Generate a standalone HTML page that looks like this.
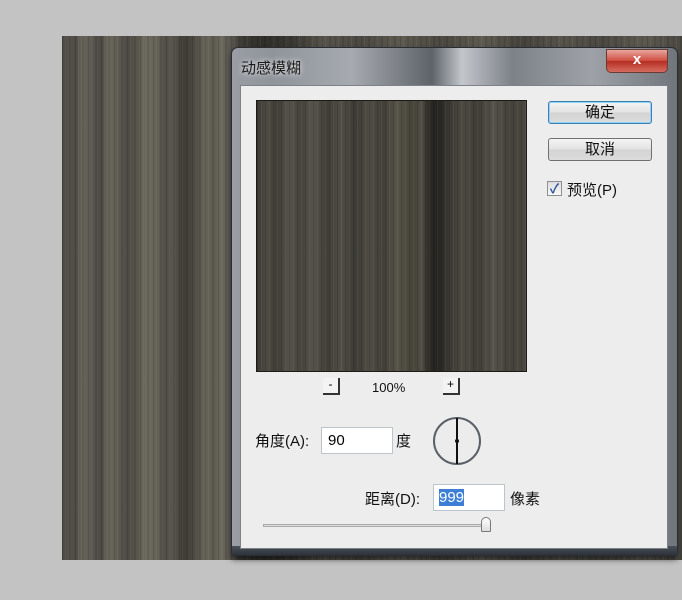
<!DOCTYPE html>
<html><head><meta charset="utf-8"><style>
*{margin:0;padding:0;box-sizing:border-box}
body{width:682px;height:600px;background:#c3c3c3;position:relative;overflow:hidden;font-family:"Liberation Sans","Noto Sans CJK SC",sans-serif;}
.canvas{position:absolute;left:62px;top:36px;width:620px;height:524px;
background:linear-gradient(90deg,#4a4842 0,#55534b 8px,#4c4a43 14px,#6a675d 20px,#5a584f 30px,#4b4942 40px,#6c695e 46px,#5e5b52 56px,#4c4a43 66px,#5a574e 76px,#6e6b60 84px,#636056 96px,#4f4d45 104px,#5b584f 112px,#3e3c36 120px,#4a4841 132px,#67645a 142px,#5f5c52 152px,#6b685d 160px,#55534b 170px,#3d3b35 180px,#2f2e29 200px,#3a3833 230px,#55524a 260px,#4b4942 300px,#5c594f 340px,#49473f 380px,#5e5b51 420px,#45433c 460px,#55534a 500px,#4a4841 540px,#5c5950 580px,#4b4942 620px);}
.canvas:after{content:"";position:absolute;inset:0;background:repeating-linear-gradient(90deg,rgba(0,0,0,.12) 0 1px,transparent 1px 3px,rgba(255,255,255,.05) 3px 4px,transparent 4px 7px,rgba(0,0,0,.1) 7px 9px,transparent 9px 13px)}
.dlg{position:absolute;left:231px;top:47px;width:447px;height:509px;border-radius:7px 7px 3px 3px;border:1px solid #2a2d33;
background:linear-gradient(90deg,#9a9ea4 0,#8f949b 40px,#a6aab0 120px,#5e6369 200px,#c3c7cc 230px,#7d8188 280px,#9ea2a8 360px,#6f747a 447px);box-shadow:0 4px 6px rgba(0,0,0,.5)}
.dlg .bottom{position:absolute;left:0;right:0;bottom:0;height:9px;background:linear-gradient(#4a5059,#2e333a)}
.title{position:absolute;left:9px;top:9px;font-size:15px;color:#1a1a1a;text-shadow:0 0 6px #fff}
.close{position:absolute;left:374px;top:1px;width:62px;height:24px;border:1px solid #6a3a35;border-radius:0 0 5px 5px;background:linear-gradient(#e6a79f,#cf4a3d 50%,#b52e22 51%,#d56c5f);color:#fff;font-weight:bold;font-size:15px;text-align:center;line-height:20px}
.content{position:absolute;left:8px;top:37px;width:428px;height:464px;background:#ededed;border:1px solid #7d8289}
.preview{position:absolute;left:15px;top:14px;width:271px;height:272px;border:1px solid #1c1b18;
background:linear-gradient(90deg,#3b3a34 0,#4d4b43 10px,#3e3c36 20px,#55534a 32px,#45433c 44px,#57544b 56px,#403e37 70px,#504e45 84px,#3c3a34 98px,#4e4c44 112px,#433f38 126px,#565349 140px,#464339 155px,#4f4c43 165px,#2b2a25 172px,#24231f 180px,#3a3832 192px,#4c4a41 206px,#3f3d36 220px,#55524a 236px,#44423b 252px,#4a4840 271px)}
.preview:after{content:"";position:absolute;inset:0;background:repeating-linear-gradient(90deg,rgba(0,0,0,.15) 0 1px,transparent 1px 4px,rgba(255,255,255,.06) 4px 5px,transparent 5px 8px)}
.btn{position:absolute;left:307px;width:104px;height:23px;border:1px solid #707070;border-radius:3px;background:linear-gradient(#f4f4f4,#e2e2e2 50%,#d3d3d3 51%,#dcdcdc);font-size:15px;text-align:center;line-height:21px;color:#111}
.btn.def{border-color:#3c7fb1;box-shadow:inset 0 0 0 1px #8fd3f5}
.t{position:absolute;font-size:15px;color:#111;white-space:nowrap}
.cb{position:absolute;left:306px;top:95px;width:15px;height:15px;border:1px solid #8f8f8f;background:linear-gradient(#dcdcdc,#fafafa);font-size:13px;font-weight:bold;line-height:13px;text-align:center;color:#2a4f9c}
.zb{position:absolute;width:17px;height:17px;border-right:2px solid #333;border-bottom:2px solid #333;background:#f3f3f3;font-size:12px;text-align:center;line-height:13px}
.inp{position:absolute;height:27px;background:#fff;border:1px solid #bcc4cc;font-size:15px;padding:4px 0 0 6px}
</style></head><body>
<div class="canvas"></div>
<div class="dlg">
<div class="bottom"></div>
<div class="title">动感模糊</div>
<div class="close">x</div>
<div class="content">
<div class="preview"></div>
<div class="btn def" style="top:15px">确定</div>
<div class="btn" style="top:52px">取消</div>
<div class="cb">✓</div>
<div class="t" style="left:326px;top:93px">预览(P)</div>
<div class="zb" style="left:82px;top:292px">-</div>
<div class="t" style="left:131px;top:294px;font-size:13px">100%</div>
<div class="zb" style="left:202px;top:292px">+</div>
<div class="t" style="left:14px;top:344px">角度(A):</div>
<div class="inp" style="left:80px;top:341px;width:72px">90</div>
<div class="t" style="left:155px;top:344px">度</div>
<svg style="position:absolute;left:191px;top:330px" width="50" height="50"><circle cx="25" cy="25" r="23" fill="#ececec" stroke="#5a6068" stroke-width="2"/><line x1="25" y1="2" x2="25" y2="48" stroke="#111" stroke-width="2"/><circle cx="25" cy="25" r="2" fill="#111"/></svg>
<div class="t" style="left:124px;top:402px">距离(D):</div>
<div class="inp" style="left:192px;top:398px;width:72px;padding-left:5px"><span style="background:#3d7fd6;color:#fff">999</span></div>
<div class="t" style="left:269px;top:402px">像素</div>
<div style="position:absolute;left:22px;top:438px;width:225px;height:3px;border:1px solid #aaa;background:#ddd"></div>
<div style="position:absolute;left:240px;top:431px;width:10px;height:15px;border:1px solid #777;border-radius:5px 5px 1px 1px;background:linear-gradient(#fff,#ddd)"></div>
</div>
</div>
</body></html>
